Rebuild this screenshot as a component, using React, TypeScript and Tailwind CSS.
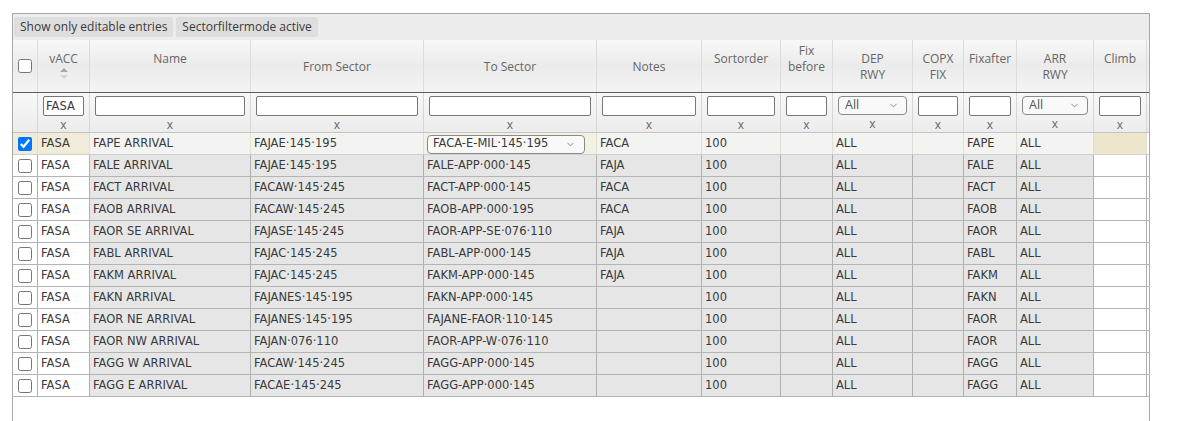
import React from 'react';
import { ChevronDown } from 'lucide-react';

type Col = {
  key: string;
  w: string;
  head: string[];
  pt: string;
  filter: 'none' | 'input' | 'select';
  white?: boolean;
};

const cols: Col[] = [
  { key: 'cb', w: 'w-[25px]', head: [], pt: 'pt-0', filter: 'none', white: true },
  { key: 'vacc', w: 'w-[52px]', head: ['vACC'], pt: 'pt-[11px]', filter: 'input', white: true },
  { key: 'name', w: 'w-[161px]', head: ['Name'], pt: 'pt-[11px]', filter: 'input' },
  { key: 'from', w: 'w-[173px]', head: ['From Sector'], pt: 'pt-[19px]', filter: 'input' },
  { key: 'to', w: 'w-[173px]', head: ['To Sector'], pt: 'pt-[19px]', filter: 'input' },
  { key: 'notes', w: 'w-[105px]', head: ['Notes'], pt: 'pt-[19px]', filter: 'input' },
  { key: 'sort', w: 'w-[79px]', head: ['Sortorder'], pt: 'pt-[11px]', filter: 'input' },
  { key: 'fixb', w: 'w-[52px]', head: ['Fix', 'before'], pt: 'pt-[3px]', filter: 'input' },
  { key: 'dep', w: 'w-[80px]', head: ['DEP', 'RWY'], pt: 'pt-[11px]', filter: 'select' },
  { key: 'copx', w: 'w-[51px]', head: ['COPX', 'FIX'], pt: 'pt-[11px]', filter: 'input' },
  { key: 'fixa', w: 'w-[53px]', head: ['Fixafter'], pt: 'pt-[11px]', filter: 'input' },
  { key: 'arr', w: 'w-[77px]', head: ['ARR', 'RWY'], pt: 'pt-[11px]', filter: 'select' },
  { key: 'climb', w: 'w-[53px]', head: ['Climb'], pt: 'pt-[11px]', filter: 'input', white: true },
  // next column, cut off by the frame
  { key: 'extra', w: 'w-[20px]', head: [], pt: 'pt-0', filter: 'none', white: true },
];

type Row = {
  checked: boolean;
  name: string;
  from: string;
  to: string;
  notes: string;
  fixa: string;
};

const rows: Row[] = [
  { checked: true, name: 'FAPE ARRIVAL', from: 'FAJAE·145·195', to: 'FACA-E-MIL·145·195', notes: 'FACA', fixa: 'FAPE' },
  { checked: false, name: 'FALE ARRIVAL', from: 'FAJAE·145·195', to: 'FALE-APP·000·145', notes: 'FAJA', fixa: 'FALE' },
  { checked: false, name: 'FACT ARRIVAL', from: 'FACAW·145·245', to: 'FACT-APP·000·145', notes: 'FACA', fixa: 'FACT' },
  { checked: false, name: 'FAOB ARRIVAL', from: 'FACAW·145·245', to: 'FAOB-APP·000·195', notes: 'FACA', fixa: 'FAOB' },
  { checked: false, name: 'FAOR SE ARRIVAL', from: 'FAJASE·145·245', to: 'FAOR-APP-SE·076·110', notes: 'FAJA', fixa: 'FAOR' },
  { checked: false, name: 'FABL ARRIVAL', from: 'FAJAC·145·245', to: 'FABL-APP·000·145', notes: 'FAJA', fixa: 'FABL' },
  { checked: false, name: 'FAKM ARRIVAL', from: 'FAJAC·145·245', to: 'FAKM-APP·000·145', notes: 'FAJA', fixa: 'FAKM' },
  { checked: false, name: 'FAKN ARRIVAL', from: 'FAJANES·145·195', to: 'FAKN-APP·000·145', notes: '', fixa: 'FAKN' },
  { checked: false, name: 'FAOR NE ARRIVAL', from: 'FAJANES·145·195', to: 'FAJANE-FAOR·110·145', notes: '', fixa: 'FAOR' },
  { checked: false, name: 'FAOR NW ARRIVAL', from: 'FAJAN·076·110', to: 'FAOR-APP-W·076·110', notes: '', fixa: 'FAOR' },
  { checked: false, name: 'FAGG W ARRIVAL', from: 'FACAW·145·245', to: 'FAGG-APP·000·145', notes: '', fixa: 'FAGG' },
  { checked: false, name: 'FAGG E ARRIVAL', from: 'FACAE·145·245', to: 'FAGG-APP·000·145', notes: '', fixa: 'FAGG' },
];

function cellText(row: Row, key: string) {
  switch (key) {
    case 'vacc': return 'FASA';
    case 'name': return row.name;
    case 'from': return row.from;
    case 'to': return row.to;
    case 'notes': return row.notes;
    case 'sort': return '100';
    case 'dep': return 'ALL';
    case 'fixa': return row.fixa;
    case 'arr': return 'ALL';
    default: return '';
  }
}

// sort arrows under vACC
const SortArrows = () => (
  <svg width="8" height="11" viewBox="0 0 8 11" className="mx-auto mt-[1px]">
    <path d="M4 0 L8 4 L0 4 Z" fill="#a8a8a8" />
    <path d="M4 11 L8 7 L0 7 Z" fill="#d2d2d2" />
  </svg>
);

const FakeSelect = ({ label, wide }: { label: string; wide?: boolean }) => (
  <div
    className={
      wide
        ? "flex items-center justify-between w-[158px] h-[19px] border border-[#8a8a8a] rounded-[4px] bg-[#f9f9f9] pl-[5px] pr-[8px] font-['DejaVu_Sans',sans-serif] text-[11.5px] text-[#3a3a3a]"
        : "flex items-center justify-between w-full h-[19px] border border-[#8a8a8a] rounded-[4px] bg-[#f9f9f9] pl-[6px] pr-[7px] font-['Open_Sans',sans-serif] text-[12.5px] text-[#555]"
    }
  >
    <span>{label}</span>
    <ChevronDown size={11} strokeWidth={1.6} color="#666" />
  </div>
);

export default function App() {
  return (
    <div className="w-[1177px] h-[421px] bg-white overflow-hidden pt-[13px] pl-[12px]">
      <div className="w-[1138px] h-[420px] border-t border-l border-r border-[#a9a9a9] overflow-hidden">
        {/* toolbar */}
        <div className="flex items-center gap-[3px] h-[26px] pl-[1px] bg-[#ececec] font-['Open_Sans',sans-serif] text-[12px] text-[#3a3a3a]">
          <button className="h-[20px] px-[6px] bg-[#dedede] rounded-[2px]">Show only editable entries</button>
          <button className="h-[20px] px-[6px] bg-[#dedede] rounded-[2px]">Sectorfiltermode active</button>
        </div>

        {/* header */}
        <div className="flex h-[53px] w-max border-b border-[#5c5c5c] bg-gradient-to-b from-[#f8f8f8] via-[#ebebeb] to-[#f4f4f4] font-['Open_Sans',sans-serif] text-[12px] leading-[16px] text-[#666]">
          {cols.map((c) => (
            <div key={c.key} className={`${c.w} shrink-0 border-r border-[#dcdcdc] text-center ${c.pt} ${c.key === 'cb' ? 'flex items-center justify-center' : ''}`}>
              {c.key === 'cb' ? (
                <input type="checkbox" readOnly className="w-[14px] h-[14px] m-0" />
              ) : (
                <>
                  {c.head.map((h) => (
                    <div key={h}>{h}</div>
                  ))}
                  {c.key === 'vacc' && <SortArrows />}
                </>
              )}
            </div>
          ))}
        </div>

        {/* filter row */}
        <div className="flex h-[40px] w-max border-b border-[#c4c4c4] bg-gradient-to-b from-[#f8f8f8] to-[#ececec]">
          {cols.map((c) => (
            <div key={c.key} className={`${c.w} shrink-0 border-r border-[#d6d6d6] px-[5px] pt-[3px]`}>
              {c.filter === 'input' && (
                <div className="h-[20px] border border-[#767676] rounded-[2px] bg-white px-[2px] font-['DejaVu_Sans',sans-serif] text-[11.5px] leading-[18px] text-[#3a3a3a]">
                  {c.key === 'vacc' ? 'FASA' : ''}
                </div>
              )}
              {c.filter === 'select' && <FakeSelect label="All" />}
              {c.filter !== 'none' && (
                <div className="text-center font-['Open_Sans',sans-serif] text-[12px] leading-[16px] text-[#666] mt-[1px]">x</div>
              )}
            </div>
          ))}
        </div>

        {/* rows */}
        {rows.map((r, i) => {
          const sel = i === 0;
          return (
            <div key={i} className={`flex h-[22px] w-max border-b ${sel ? 'border-[#cfcfcf]' : 'border-[#b4b4b4]'} font-['DejaVu_Sans',sans-serif] text-[11.5px] text-[#3a3a3a]`}>
              {cols.map((c) => {
                let bg = c.white ? 'bg-white' : 'bg-[#e6e6e6]';
                if (sel) {
                  if (c.key === 'cb' || c.key === 'vacc') bg = 'bg-[#f1ecda]';
                  else if (c.key === 'to') bg = 'bg-[#f4f0e3]';
                  else if (c.key === 'climb') bg = 'bg-[#ede6cd]';
                  else if (c.key === 'extra') bg = 'bg-white';
                  else bg = 'bg-[#f3f3f1]';
                }
                return (
                  <div
                    key={c.key}
                    className={`${c.w} shrink-0 ${bg} border-r ${sel ? 'border-[#e2dfd2]' : 'border-[#b0b0b0]'} flex items-center ${c.key === 'cb' ? 'justify-center' : 'px-[3px] pt-[1px]'} whitespace-nowrap overflow-hidden`}
                  >
                    {c.key === 'cb' ? (
                      <input type="checkbox" readOnly checked={r.checked} className="w-[14px] h-[14px] m-0" />
                    ) : sel && c.key === 'to' ? (
                      <FakeSelect label={r.to} wide />
                    ) : (
                      cellText(r, c.key)
                    )}
                  </div>
                );
              })}
            </div>
          );
        })}
      </div>
    </div>
  );
}
